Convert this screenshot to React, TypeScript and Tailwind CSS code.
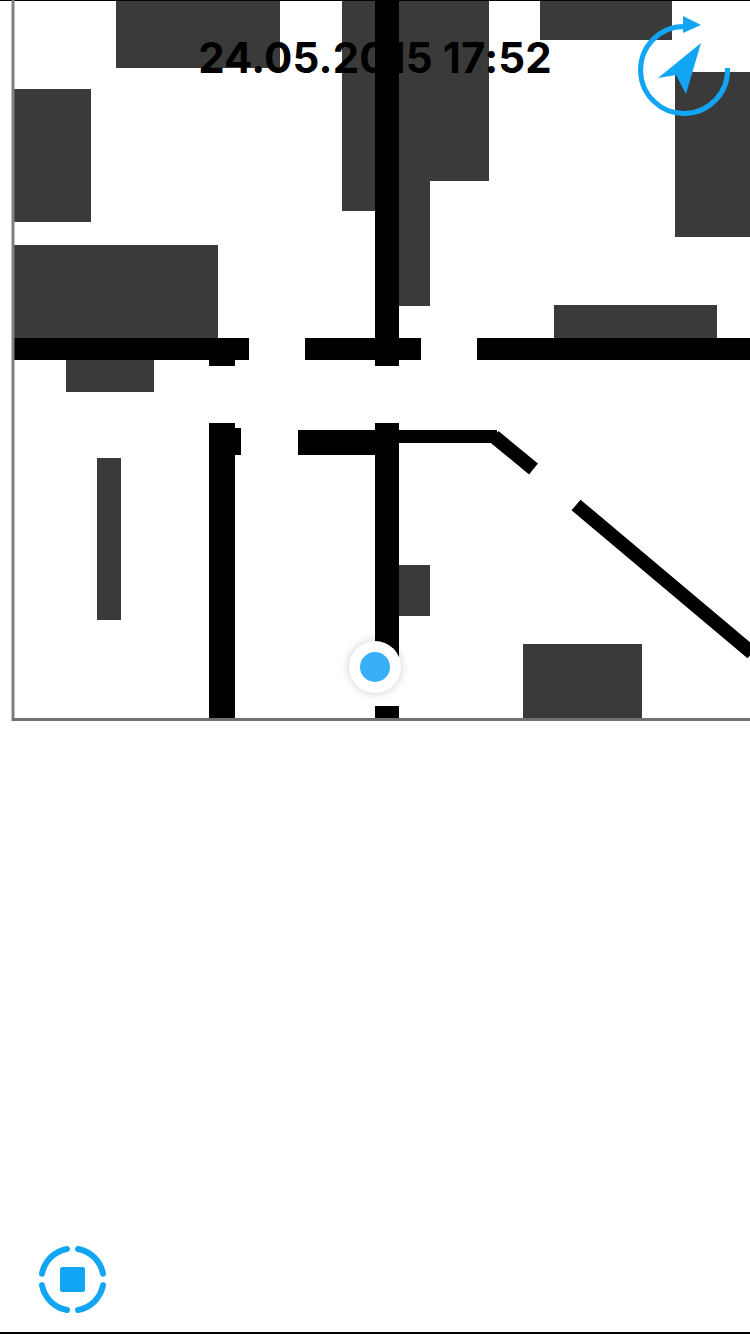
const darkBlocks = [
  [116, 0, 164, 68],
  [14, 89, 77, 133],
  [14, 245, 204, 93],
  [66, 360, 88, 32],
  [97, 458, 24, 162],
  [342, 0, 88, 211],
  [430, 0, 59, 181],
  [398, 181, 32, 125],
  [540, 0, 132, 40],
  [675, 72, 75, 165],
  [554, 305, 163, 33],
  [398, 565, 32, 51],
  [523, 644, 119, 74],
];

const walls = [
  [14, 338, 235, 22],
  [209, 338, 26, 28],
  [305, 338, 116, 22],
  [375, 0, 24, 366],
  [477, 338, 273, 22],
  [209, 423, 26, 295],
  [209, 428, 32, 27],
  [298, 430, 77, 25],
  [375, 423, 24, 240],
  [399, 430, 98, 13],
  [375, 706, 24, 12],
];

function FloorPlan() {
  return (
    <svg width="750" height="722" viewBox="0 0 750 722" className="block">
      {darkBlocks.map(([x, y, w, h]) => (
        <rect key={`${x}-${y}`} x={x} y={y} width={w} height={h} fill="#3a3a3a" />
      ))}
      {walls.map(([x, y, w, h]) => (
        <rect key={`${x}-${y}-${w}`} x={x} y={y} width={w} height={h} fill="#000" />
      ))}
      <path d="M494 436.5L533.5 469M576 505L752 653" stroke="#000" strokeWidth="14" fill="none" />
      <rect x="0" y="0" width="750" height="1" fill="#000" />
      <rect x="11.5" y="0" width="3" height="721" fill="#808080" />
      <rect x="12" y="718" width="738" height="3" fill="#707070" />
    </svg>
  );
}

function CompassIcon() {
  return (
    <svg width="100" height="110" viewBox="-4 0 100 110" fill="none" className="block">
      <path d="M87.5 59A43.5 43.5 0 1 1 44 17.5" stroke="#12a5f4" strokeWidth="5" />
      <path d="M43 7L61 16L43 24Z" fill="#12a5f4" />
      <path d="M61 34L18 69L36 66L46 85Z" fill="#12a5f4" />
    </svg>
  );
}

function StopIcon() {
  return (
    <svg width="70" height="70" viewBox="0 0 70 70" fill="none" className="block">
      <g stroke="#12a5f4" strokeWidth="6" strokeLinecap="round">
        <path d="M4 29.7A31 31 0 0 1 29 5" />
        <path d="M40 5A31 31 0 0 1 65 29.7" />
        <path d="M65 41.3A31 31 0 0 1 40 66" />
        <path d="M29 66A31 31 0 0 1 4 41.3" />
      </g>
      <rect x="22" y="23" width="25" height="25" rx="2.5" fill="#12a5f4" />
    </svg>
  );
}

export default function App() {
  return (
    <div className="flex h-[1334px] w-[750px] flex-col overflow-hidden border-b-2 border-black bg-white font-['Inter',sans-serif]">
      <div className="relative">
        <FloorPlan />

        <div className="absolute left-0 top-[33px] w-full text-center text-[42px] font-bold leading-[50px] tracking-[0.1px] text-black">
          24.05.2015 17:52
        </div>

        <button className="absolute left-[636px] top-[9px]">
          <CompassIcon />
        </button>

        <div className="absolute left-[349px] top-[641px] flex h-[52px] w-[52px] items-center justify-center rounded-full bg-white shadow-[0_0_10px_rgba(0,0,0,0.2)]">
          <div className="h-[30px] w-[30px] rounded-full bg-[#38b0f8]" />
        </div>
      </div>

      <div className="flex flex-1 items-end pb-[18px] pl-[38px]">
        <button>
          <StopIcon />
        </button>
      </div>
    </div>
  );
}
